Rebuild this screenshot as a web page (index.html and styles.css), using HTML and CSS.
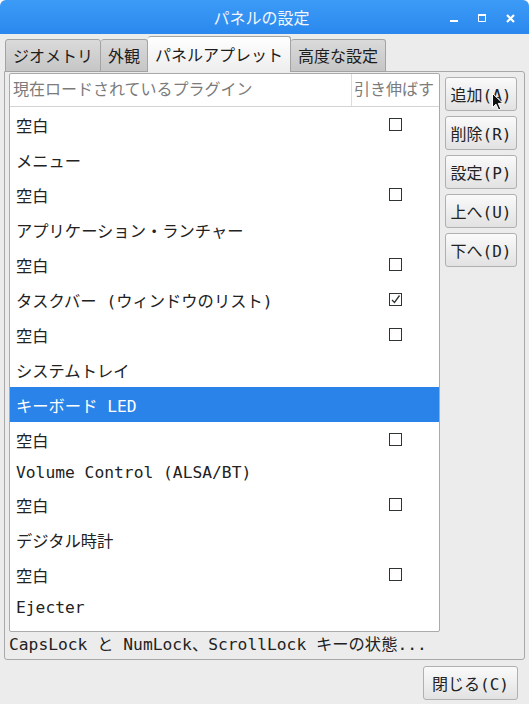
FILE: index.html
```html
<!DOCTYPE html>
<html lang="ja">
<head>
  <meta charset="UTF-8">
  <meta name="viewport" content="width=device-width, initial-scale=1.0">
  <title>パネルの設定</title>
  <link rel="stylesheet" href="styles.css">
</head>
<body>
  <div class="window">
    <div class="titlebar">
      <span></span>
      <span class="title">パネルの設定</span>
      <div class="controls">
        <svg width="8" height="8" viewBox="0 0 8 8"><rect x="0" y="6" width="8" height="2" fill="#fff"/></svg>
        <svg width="8" height="8" viewBox="0 0 8 8"><path d="M0.5 1.5H7.5V7.5H0.5Z" fill="none" stroke="#fff" stroke-width="1"/><rect x="0" y="0" width="8" height="2" fill="#fff"/></svg>
        <svg width="9" height="9" viewBox="0 0 9 9"><path d="M1 1L8 8M8 1L1 8" stroke="#fff" stroke-width="2.2"/></svg>
      </div>
    </div>

    <div class="content">
      <div class="tabs">
        <div class="tab">ジオメトリ</div>
        <div class="tab">外観</div>
        <div class="tab active">パネルアプレット</div>
        <div class="tab">高度な設定</div>
      </div>

      <div class="frame">
        <div class="page">
          <div class="list">
            <div class="list-head">
              <div class="col-name">現在ロードされているプラグイン</div>
              <div class="col-stretch">引き伸ばす</div>
            </div>
            <div class="row"><span class="name">空白</span><span class="cell"><span class="box"></span></span></div>
            <div class="row"><span class="name">メニュー</span><span class="cell"></span></div>
            <div class="row"><span class="name">空白</span><span class="cell"><span class="box"></span></span></div>
            <div class="row"><span class="name">アプリケーション・ランチャー</span><span class="cell"></span></div>
            <div class="row"><span class="name">空白</span><span class="cell"><span class="box"></span></span></div>
            <div class="row"><span class="name">タスクバー (ウィンドウのリスト)</span><span class="cell"><span class="box checked"><svg width="11" height="11" viewBox="0 0 11 11"><path d="M2 6L4.5 8.5L9.5 1.5" fill="none" stroke="#2e3436" stroke-width="1.3"/></svg></span></span></div>
            <div class="row"><span class="name">空白</span><span class="cell"><span class="box"></span></span></div>
            <div class="row"><span class="name">システムトレイ</span><span class="cell"></span></div>
            <div class="row selected"><span class="name">キーボード LED</span><span class="cell"></span></div>
            <div class="row"><span class="name">空白</span><span class="cell"><span class="box"></span></span></div>
            <div class="row latin"><span class="name">Volume Control (ALSA/BT)</span><span class="cell"></span></div>
            <div class="row"><span class="name">空白</span><span class="cell"><span class="box"></span></span></div>
            <div class="row"><span class="name">デジタル時計</span><span class="cell"></span></div>
            <div class="row"><span class="name">空白</span><span class="cell"><span class="box"></span></span></div>
            <div class="row latin"><span class="name">Ejecter</span><span class="cell"></span></div>
          </div>

          <div class="buttons">
            <button class="btn">追加(A)</button>
            <button class="btn">削除(R)</button>
            <button class="btn">設定(P)</button>
            <button class="btn">上へ(U)</button>
            <button class="btn">下へ(D)</button>
          </div>
        </div>
        <div class="status">CapsLock と NumLock、ScrollLock キーの状態...</div>
      </div>

      <div class="footer">
        <button class="btn close">閉じる(C)</button>
      </div>
    </div>

    <!-- mouse pointer over the first button -->
    <svg class="cursor" width="12" height="18" viewBox="0 0 12 18">
      <path d="M0.5 0.5V14.5L4 11.2L6.6 17L8.8 16L6.3 10.4H11Z" fill="#111" stroke="#fff" stroke-width="1"/>
    </svg>
  </div>
</body>
</html>
```

FILE: styles.css
```css
* {
  box-sizing: border-box;
}

body {
  margin: 0;
  background-color: #fff;
  font-family: "DejaVu Sans Mono", "Noto Sans CJK JP", monospace;
  font-size: 16px;
  color: #222;
}

.window {
  position: relative;
  width: 529px;
  height: 704px;
  background-color: #ececec;
  border-radius: 6px 6px 0 0;
  overflow: hidden;
}

.titlebar {
  display: grid;
  grid-template-columns: 1fr auto 1fr;
  align-items: center;
  height: 34px;
  background: linear-gradient(#3c9bf6, #2a88ee);
  color: #f2f6fc;
}

.title {
  font-family: "Noto Sans CJK JP", sans-serif;
  font-size: 16px;
  padding-right: 6px;
}

.controls {
  display: flex;
  justify-content: flex-end;
  align-items: center;
  gap: 20px;
  padding-right: 14px;
  padding-top: 2px;
}

.content {
  padding: 0 4px;
}

.tabs {
  position: relative;
  z-index: 1;
  display: flex;
  align-items: flex-end;
  height: 38px;
  margin-bottom: -1px;
  padding-left: 1px;
}

.tab {
  height: 33px;
  padding: 0 7px;
  line-height: 31px;
  font-family: "Noto Sans CJK JP", sans-serif;
  border: 1px solid #a3a3a3;
  border-left: none;
  border-radius: 3px 3px 0 0;
  background: linear-gradient(#dadada, #c6c6c6);
  color: #1c1c1c;
}

.tab:first-child {
  border-left: 1px solid #a3a3a3;
}

.tab.active {
  height: 36px;
  line-height: 35px;
  border-bottom: none;
  background: linear-gradient(#ffffff, #ededed);
}

.frame {
  height: 589px;
  border: 1px solid #a8a8a8;
  border-radius: 0 3px 3px 3px;
  background-color: #ececec;
}

.page {
  display: flex;
  gap: 5px;
  padding: 1px 7px 0 4px;
}

.list {
  flex: 1;
  height: 559px;
  background-color: #fff;
  border: 1px solid #aaa;
  border-radius: 2px;
  overflow: hidden;
}

.list-head {
  display: flex;
  height: 33px;
  border-bottom: 1px solid #d4d4d4;
  color: #7b7b7b;
  line-height: 32px;
}

.col-name {
  flex: 1;
  padding-left: 3px;
}

.col-stretch {
  width: 88px;
  padding-left: 2px;
  border-left: 1px solid #dcdcdc;
}

.row {
  display: flex;
  align-items: center;
  height: 35px;
  font-size: 16.3px;
}

.row.latin {
  height: 30px;
}

.row.selected {
  background-color: #2a83e8;
  color: #fff;
}

.name {
  flex: 1;
  padding-left: 6px;
}

.cell {
  display: flex;
  justify-content: center;
  width: 88px;
}

.box {
  display: flex;
  align-items: center;
  justify-content: center;
  width: 13px;
  height: 13px;
  border: 1.3px solid #2e3436;
  background-color: #fff;
}

.buttons {
  display: flex;
  flex-direction: column;
  gap: 5px;
  padding-top: 4px;
}

.btn {
  height: 34px;
  width: 72px;
  padding: 0;
  font-family: "DejaVu Sans Mono", "Noto Sans CJK JP", monospace;
  font-size: 16px;
  color: #222;
  border: 1px solid #b0b0b0;
  border-radius: 3px;
  background: linear-gradient(#fafafa, #e2e2e2);
}

.status {
  height: 26px;
  padding-left: 4px;
  line-height: 26px;
  font-size: 16.3px;
}

.footer {
  display: flex;
  justify-content: flex-end;
  padding: 6px 7px 0 0;
}

.btn.close {
  width: 95px;
}

.cursor {
  position: absolute;
  left: 492px;
  top: 93px;
}
```
